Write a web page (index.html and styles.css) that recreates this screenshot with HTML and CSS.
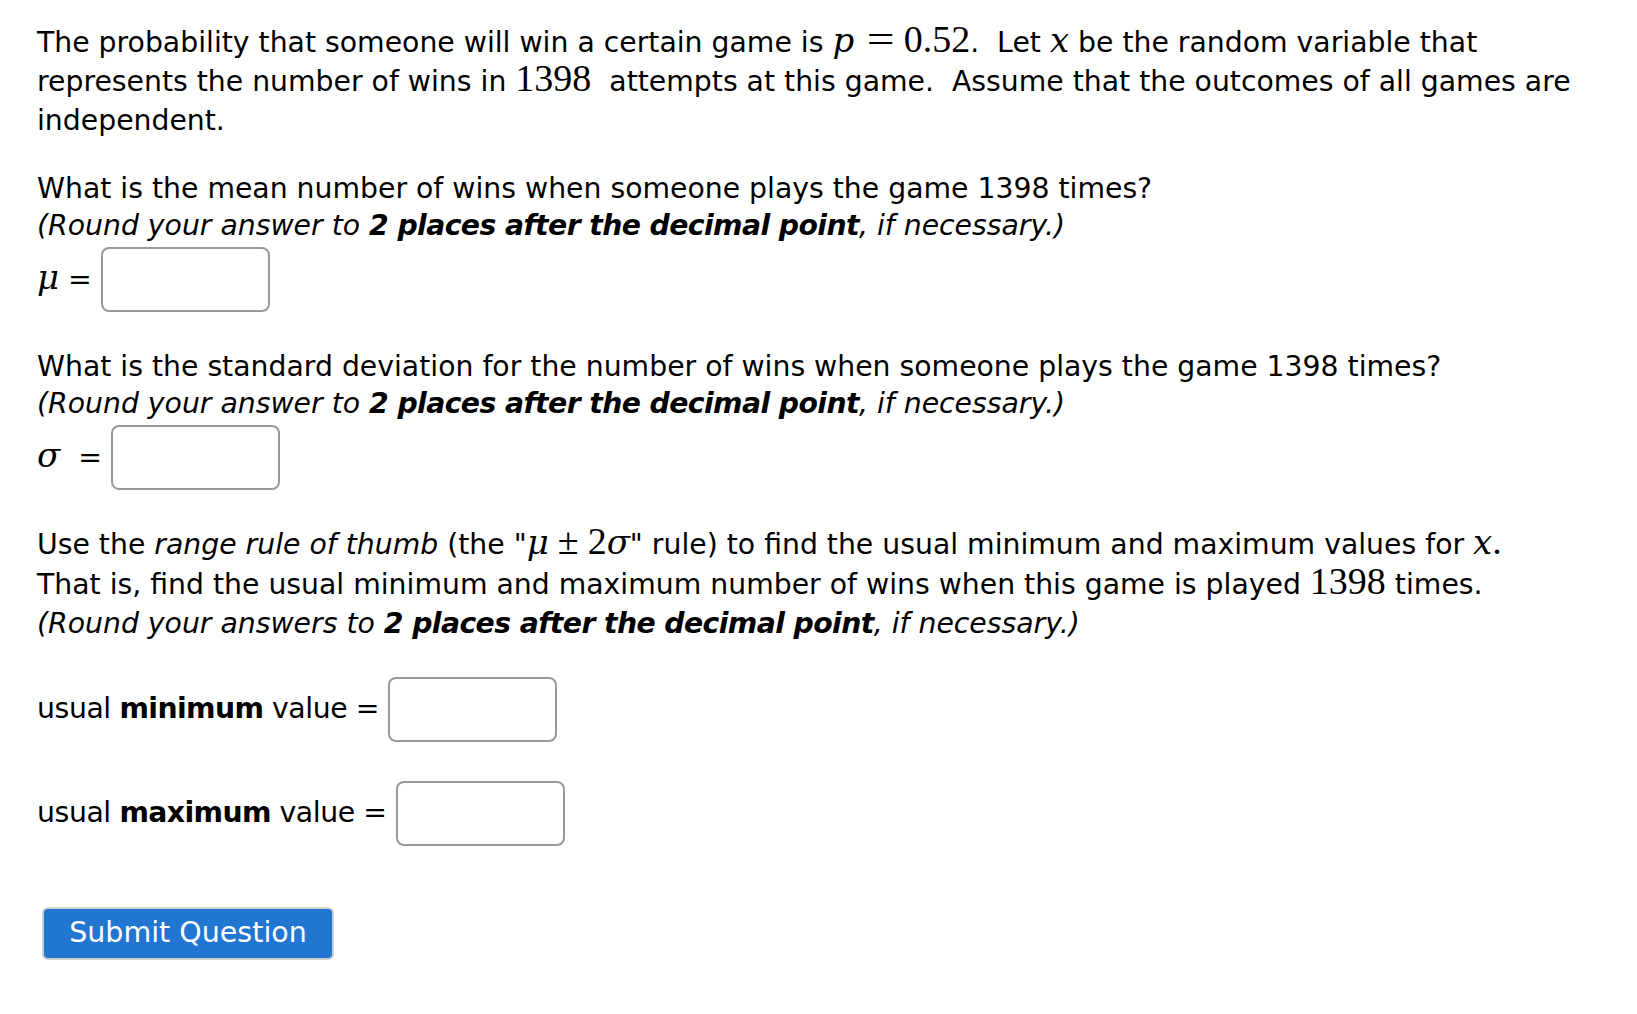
FILE: index.html
```html
<!DOCTYPE html>
<html>
<head>
<meta charset="utf-8">
<link rel="stylesheet" href="styles.css">
</head>
<body>
<div class="page">
  <p class="intro">The probability that someone will win a certain game is <span class="m"><i>p</i><span class="rel">=</span>0.52</span>.&nbsp; Let <span class="m"><i>x</i></span> be the random variable that represents the number of wins in <span class="m">1398</span>&nbsp; attempts at this game.&nbsp; Assume that the outcomes of all games are independent.</p>

  <p class="q q1">What is the mean number of wins when someone plays the game 1398 times?<br><em>(Round your answer to <b>2 places after the decimal point</b>, if necessary.)</em></p>
  <div class="row row-mu"><span class="lbl"><span class="m"><i>μ</i></span> =</span><span class="box"></span></div>

  <p class="q q2">What is the standard deviation for the number of wins when someone plays the game 1398 times?<br><em>(Round your answer to <b>2 places after the decimal point</b>, if necessary.)</em></p>
  <div class="row row-sigma"><span class="lbl"><span class="m"><i>σ</i></span>&nbsp; =</span><span class="box"></span></div>

  <p class="q q3">Use the <em>range rule of thumb</em> (the "<span class="m"><i>μ</i><span class="bin">±</span>2<i>σ</i></span>" rule) to find the usual minimum and maximum values for <span class="m"><i>x</i>.</span><br>That is, find the usual minimum and maximum number of wins when this game is played <span class="m">1398</span> times.<br><em>(Round your answers to <b>2 places after the decimal point</b>, if necessary.)</em></p>

  <div class="row row-min"><span class="lbl tight">usual <b>minimum</b> value =</span><span class="box"></span></div>
  <div class="row row-max"><span class="lbl tight">usual <b>maximum</b> value =</span><span class="box"></span></div>

  <div class="actions"><button class="submit">Submit Question</button></div>
</div>
</body>
</html>
```
FILE: styles.css
```css
html, body {
  margin: 0;
  padding: 0;
  background: #fff;
}
.page {
  padding: 23px 0 0 37px;
  width: 1565px;
  font-family: "DejaVu Sans", sans-serif;
  font-size: 28.3px;
  color: #000;
}
p {
  margin: 0;
}
b {
  letter-spacing: -0.6px;
}
.intro {
  line-height: 39px;
}
.m {
  font-family: "Liberation Serif", "DejaVu Serif", serif;
  font-size: 38px;
  line-height: 0;
}
.m i {
  font-family: "DejaVu Serif", "Liberation Serif", serif;
  font-style: italic;
  font-size: 34px;
}
.rel {
  display: inline-block;
  margin: 0 12px 0 16px;
  transform: scaleX(1.3);
}
.bin {
  display: inline-block;
  margin: 0 9px;
}
.q {
  line-height: 36.5px;
}
.q1 {
  margin-top: 31px;
}
.q2 {
  margin-top: 37px;
}
.q3 {
  margin-top: 35px;
  line-height: 39.5px;
}
.row {
  display: flex;
  align-items: center;
}
.row-mu, .row-sigma {
  margin-top: 3px;
}
.row-min {
  margin-top: 33px;
}
.row-max {
  margin-top: 39px;
}
.lbl {
  margin-right: 9px;
  line-height: 36px;
}
.tight {
  letter-spacing: -0.4px;
}
.box {
  display: block;
  width: 165px;
  height: 61px;
  border: 2px solid #999;
  border-radius: 8px;
  background: #fff;
}
.actions {
  margin-top: 61px;
  padding-left: 5px;
}
.submit {
  font-family: "DejaVu Sans", sans-serif;
  font-size: 28.5px;
  color: #fff;
  background: #2176d2;
  border: 2px solid #cfcfcf;
  border-radius: 6px;
  width: 292px;
  height: 53px;
  padding: 0;
  line-height: 1;
}
```
